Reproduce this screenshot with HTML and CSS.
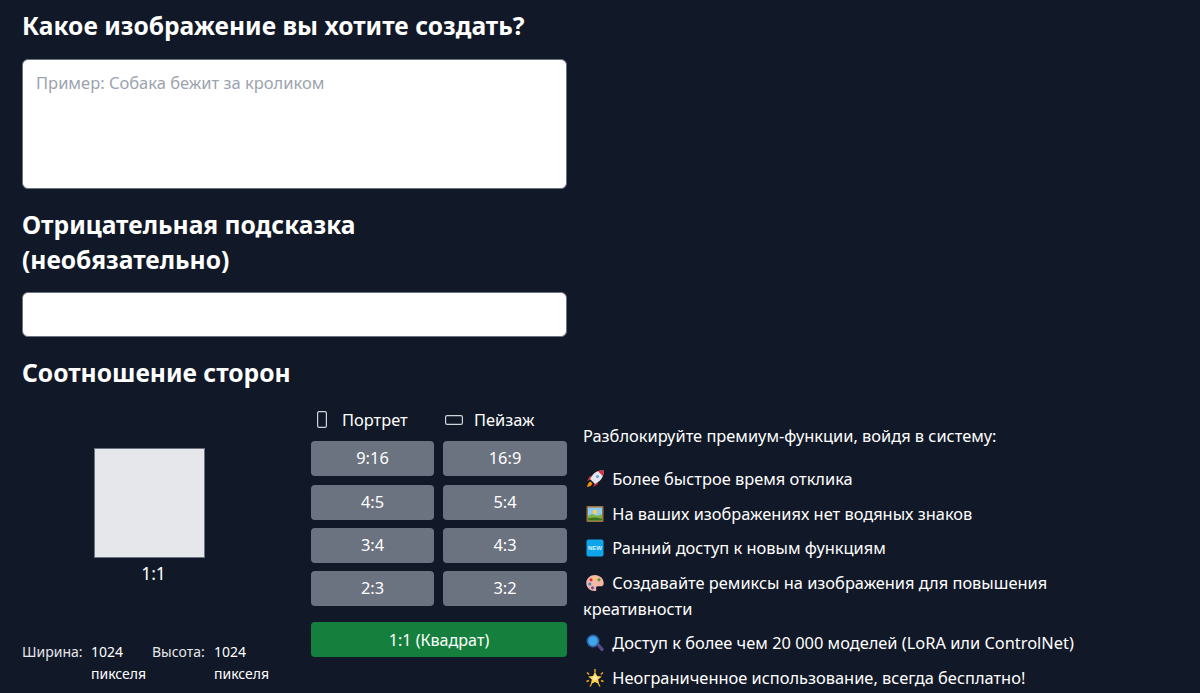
FILE: index.html
```html
<!DOCTYPE html>
<html lang="ru">
  <head>
    <meta charset="UTF-8" />
    <meta name="viewport" content="width=device-width, initial-scale=1.0" />
    <title>Создать изображение</title>
    <link rel="stylesheet" href="styles.css">
  </head>
  <body>
    <div class="form-column">
      <h2 class="title">Какое изображение вы хотите создать?</h2>
      <textarea class="prompt" placeholder="Пример: Собака бежит за кроликом"></textarea>
      <h2 class="title title-narrow">Отрицательная подсказка (необязательно)</h2>
      <input class="negative" type="text" />
      <h2 class="title">Соотношение сторон</h2>
    </div>

    <div class="bottom">
      <div class="preview">
        <div class="preview-box"></div>
        <div class="preview-label">1:1</div>
        <div class="sizes">
          <span class="size-name">Ширина:</span>
          <span class="size-value">1024 пикселя</span>
          <span class="size-name">Высота:</span>
          <span class="size-value">1024 пикселя</span>
        </div>
      </div>

      <div class="ratios">
        <div class="ratio-head head-portrait">
          <svg class="icon-frame" viewBox="0 0 10 17" width="10" height="17"><rect x="0.600" y="0.600" width="8.800" height="15.800" rx="1.500" /></svg>
          Портрет
        </div>
        <div class="ratio-head head-landscape">
          <svg class="icon-frame" viewBox="0 0 18 10" width="18" height="10"><rect x="0.600" y="0.600" width="16.800" height="8.800" rx="1.500" /></svg>
          Пейзаж
        </div>
        <button class="ratio">9:16</button>
        <button class="ratio">16:9</button>
        <button class="ratio">4:5</button>
        <button class="ratio">5:4</button>
        <button class="ratio">3:4</button>
        <button class="ratio">4:3</button>
        <button class="ratio">2:3</button>
        <button class="ratio">3:2</button>
        <button class="ratio ratio-active">1:1 (Квадрат)</button>
      </div>

      <div class="perks">
        <p class="perks-intro">Разблокируйте премиум-функции, войдя в систему:</p>
        <p class="perk">
          <svg class="emoji" viewBox="0 0 18 18"><path d="M4.500 9.500 1 11l2.500-4.500 3.500-1zM8.500 13.500 7 17l4.500-2.500 1-3.500z" fill="#c8303f" /><path d="M17.500.5c-4.500-.4-8 1.200-10.500 4L4 9l5 5 4.500-3c2.800-2.500 4.400-6 4-10.500z" fill="#e8e6ec" /><path d="M17.500.5c-2-.2-3.800 0-5.500.7l4.800 4.800c.7-1.700.9-3.500.7-5.500z" fill="#dd2e44" /><circle cx="11.500" cy="6.500" r="1.600" fill="#55acee" /><path d="M4.500 11.500C3 12 1.500 13.500 1 17c3.500-.5 5-2 5.500-3.500z" fill="#f4900c" /></svg>
          Более быстрое время отклика
        </p>
        <p class="perk">
          <svg class="emoji" viewBox="0 0 18 18"><rect x="0.500" y="1" width="17" height="16" rx="1" fill="#a0703c" /><rect x="2" y="2.500" width="14" height="13" fill="#8ccaf0" /><circle cx="9" cy="7" r="2.200" fill="#ffcc4d" /><path d="M2 15.500V11c3-2.500 5-2 7-1s4 .5 7-1v6.500z" fill="#7cb342" /><path d="M2 15.500V13.500c4-1.500 8-1.500 14 0v2z" fill="#3e721d" /></svg>
          На ваших изображениях нет водяных знаков
        </p>
        <p class="perk">
          <svg class="emoji" viewBox="0 0 18 18"><rect x="0.500" y="0.500" width="17" height="17" rx="2" fill="#0ea5e9" /><text class="emoji-new" x="9" y="11">NEW</text></svg>
          Ранний доступ к новым функциям
        </p>
        <p class="perk">
          <svg class="emoji" viewBox="0 0 18 18"><path d="M9 1C4.300 1 .3 4.500.3 9s3.900 8 8.200 8c1.700 0 2.100-1 1.700-2.100-.5-1.300 0-2.600 1.600-2.600h3c1.800 0 2.900-1 2.900-3.100C17.700 4.600 13.700 1 9 1z" fill="#f4b8a8" /><circle cx="5" cy="5.800" r="1.600" fill="#dd2e44" /><circle cx="9" cy="4.300" r="1.600" fill="#fdcb58" /><circle cx="13" cy="5.800" r="1.600" fill="#5c913b" /><circle cx="3.800" cy="10" r="1.600" fill="#3b88c3" /><circle cx="6.500" cy="13.800" r="1.600" fill="#744eaa" /></svg>
          Создавайте ремиксы на изображения для повышения креативности
        </p>
        <p class="perk">
          <svg class="emoji" viewBox="0 0 18 18"><path d="m10.500 11 2-2 5 5.500c.5.700.2 1.500-.4 2.100-.6.600-1.400.8-2.100.3z" fill="#5b4a8c" /><circle cx="7" cy="7" r="6.500" fill="#2f5ea8" /><circle cx="7" cy="7" r="4.800" fill="#3fa4e8" /></svg>
          Доступ к более чем 20 000 моделей (LoRA или ControlNet)
        </p>
        <p class="perk">
          <svg class="emoji" viewBox="0 0 18 18"><path d="M9 0v3M1 3.500l2.200 2M17 3.500l-2.200 2M.5 12.500l2.500-1M17.500 12.500l-2.500-1M4 17.500l1.500-2.500M14 17.500 12.500 15" stroke="#f4a623" stroke-width="1.400" fill="none" /><path d="m9 2.500 2 4.400 4.800.5-3.600 3.200 1 4.700L9 12.900l-4.200 2.400 1-4.700-3.600-3.200 4.800-.5z" fill="#ffcf4d" /><circle cx="9" cy="9" r="2.500" fill="#ffe99a" /></svg>
          Неограниченное использование, всегда бесплатно!
        </p>
      </div>
    </div>
  </body>
</html>
```

FILE: styles.css
```css
html,
body {
  height: 100%;
}
body {
  font-family: "Noto Sans", "Open Sans", Arial, sans-serif;
  background-color: #111827;
  color: #fff;
  margin: 0;
  padding: 8px 0 0 22px;
  box-sizing: border-box;
  overflow: hidden;
  font-size: 16.4px;
}
.form-column {
  width: 545px;
}
.title {
  font-size: 24.6px;
  line-height: 35px;
  font-weight: 700;
  margin: 0;
}
.title-narrow {
  max-width: 360px;
}
.prompt {
  display: block;
  box-sizing: border-box;
  width: 100%;
  height: 130px;
  margin: 16px 0 18px;
  padding: 11px 13px;
  border: 1px solid #6b7280;
  border-radius: 6px;
  background: #fff;
  font: inherit;
  font-size: 16.5px;
  resize: none;
}
.prompt::placeholder {
  color: #9ca3af;
}
.negative {
  display: block;
  box-sizing: border-box;
  width: 100%;
  height: 45px;
  margin: 15px 0 18px;
  border: 1px solid #6b7280;
  border-radius: 6px;
  background: #fff;
}
.bottom {
  display: flex;
}
.preview {
  width: 263px;
  margin-right: 26px;
  display: flex;
  flex-direction: column;
}
.preview-box {
  width: 111px;
  height: 110px;
  margin: 58px 0 0 72px;
  background: #e5e7eb;
  border: 1px solid #6b7280;
  box-sizing: border-box;
}
.preview-label {
  width: 263px;
  margin-top: 3px;
  text-align: center;
  font-size: 17.5px;
  line-height: 24px;
}
.sizes {
  display: grid;
  grid-template-columns: 69px 61px 62px 62px;
  margin-top: 56px;
  font-size: 14px;
  line-height: 22px;
}
.size-name {
  color: #e5e7eb;
}
.ratios {
  width: 256px;
  margin-top: 16px;
  display: grid;
  grid-template-columns: 123px 124px;
  grid-template-rows: 27px repeat(4, 35px) 43px;
  column-gap: 9px;
  row-gap: 8.300px;
  align-content: start;
}
.ratio-head {
  display: flex;
  align-items: center;
}
.head-portrait {
  gap: 15px;
  padding-left: 6px;
}
.head-landscape {
  gap: 11px;
  padding-left: 2px;
}
.icon-frame rect {
  fill: none;
  stroke: #d1d5db;
  stroke-width: 1.200;
}
.ratio {
  border: none;
  border-radius: 4px;
  background-color: #6b7280;
  color: #fff;
  font: inherit;
  padding: 0 0 2px;
  cursor: pointer;
}
.ratio-active {
  grid-column: 1 / 3;
  margin-top: 8px;
  padding: 0;
  background-color: #15803d;
  font-size: 16.100px;
}
.perks {
  margin-left: 16px;
  width: 500px;
  padding-top: 33px;
  line-height: 26px;
}
.perks-intro {
  margin: 0 0 17px;
}
.perk {
  margin: 0 0 8.500px;
}
.emoji {
  width: 18px;
  height: 18px;
  margin: 0 4px 0 3px;
  vertical-align: -3px;
}
.emoji-new {
  fill: #d6f0fc;
  font-family: "Liberation Sans", Arial, sans-serif;
  font-size: 6px;
  font-weight: 700;
  text-anchor: middle;
}
```
